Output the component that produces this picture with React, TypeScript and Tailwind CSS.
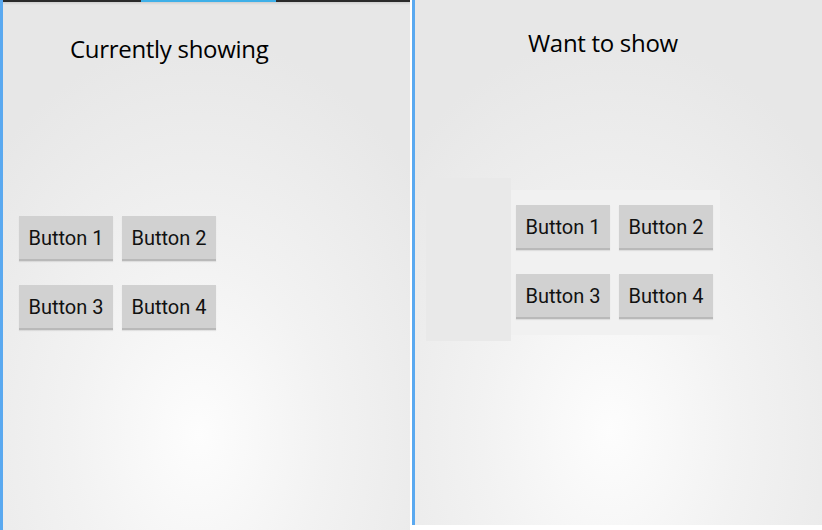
import React from 'react'

const panelBg =
  'bg-[radial-gradient(ellipse_70%_75%_at_48%_82%,#fdfdfd_0%,#f2f2f2_45%,#e7e7e7_100%)]'

function AndroidButton({ label }: { label: string }) {
  return (
    <div className="w-[94px] h-[45px] flex items-center justify-center bg-[#d1d1d1] border-b-2 border-[#b9b9b9] shadow-[0_1px_1px_rgba(0,0,0,0.08)] text-[20px] text-[#111] font-['Roboto',sans-serif]">
      {label}
    </div>
  )
}

function ButtonGrid() {
  return (
    <div className="flex flex-col gap-[24px]">
      <div className="flex gap-[9px]">
        <AndroidButton label="Button 1" />
        <AndroidButton label="Button 2" />
      </div>
      <div className="flex gap-[9px]">
        <AndroidButton label="Button 3" />
        <AndroidButton label="Button 4" />
      </div>
    </div>
  )
}

export default function App() {
  return (
    <div className="w-[822px] h-[530px] bg-white flex overflow-hidden">
      {/* left: current layout */}
      <div className={`w-[410px] h-[530px] border-l-[3px] border-[#5aa9f0] flex flex-col shrink-0 ${panelBg}`}>
        <div className="h-[2px] bg-[#2b2b2b] flex shrink-0">
          <div className="ml-[138px] w-[135px] bg-[#3fb0e8]" />
        </div>
        <div className="h-[3px] bg-gradient-to-b from-[#cfcfcf] to-transparent shrink-0" />
        <div className="pl-[67px] pt-[29px] text-[24px] leading-[29px] text-black font-['Open_Sans',sans-serif] tracking-[-0.3px]">
          Currently showing
        </div>
        <div className="pl-[16px] pt-[153px]">
          <ButtonGrid />
        </div>
      </div>

      {/* right: wanted layout */}
      <div className={`ml-[2px] w-[410px] h-[525px] border-l-[3px] border-[#5aa9f0] flex flex-col shrink-0 ${panelBg}`}>
        <div className="pl-[113px] pt-[28px] text-[24px] leading-[29px] text-black font-['Open_Sans',sans-serif] tracking-[-0.3px]">
          Want to show
        </div>
        <div className="flex items-start pl-[11px] pt-[121px]">
          <div className="w-[85px] h-[163px] bg-[#e9e9e9]" />
          <div className="mt-[12px] w-[209px] h-[145px] bg-[#f1f1f1] pl-[5px] pt-[15px]">
            <ButtonGrid />
          </div>
        </div>
      </div>
    </div>
  )
}
